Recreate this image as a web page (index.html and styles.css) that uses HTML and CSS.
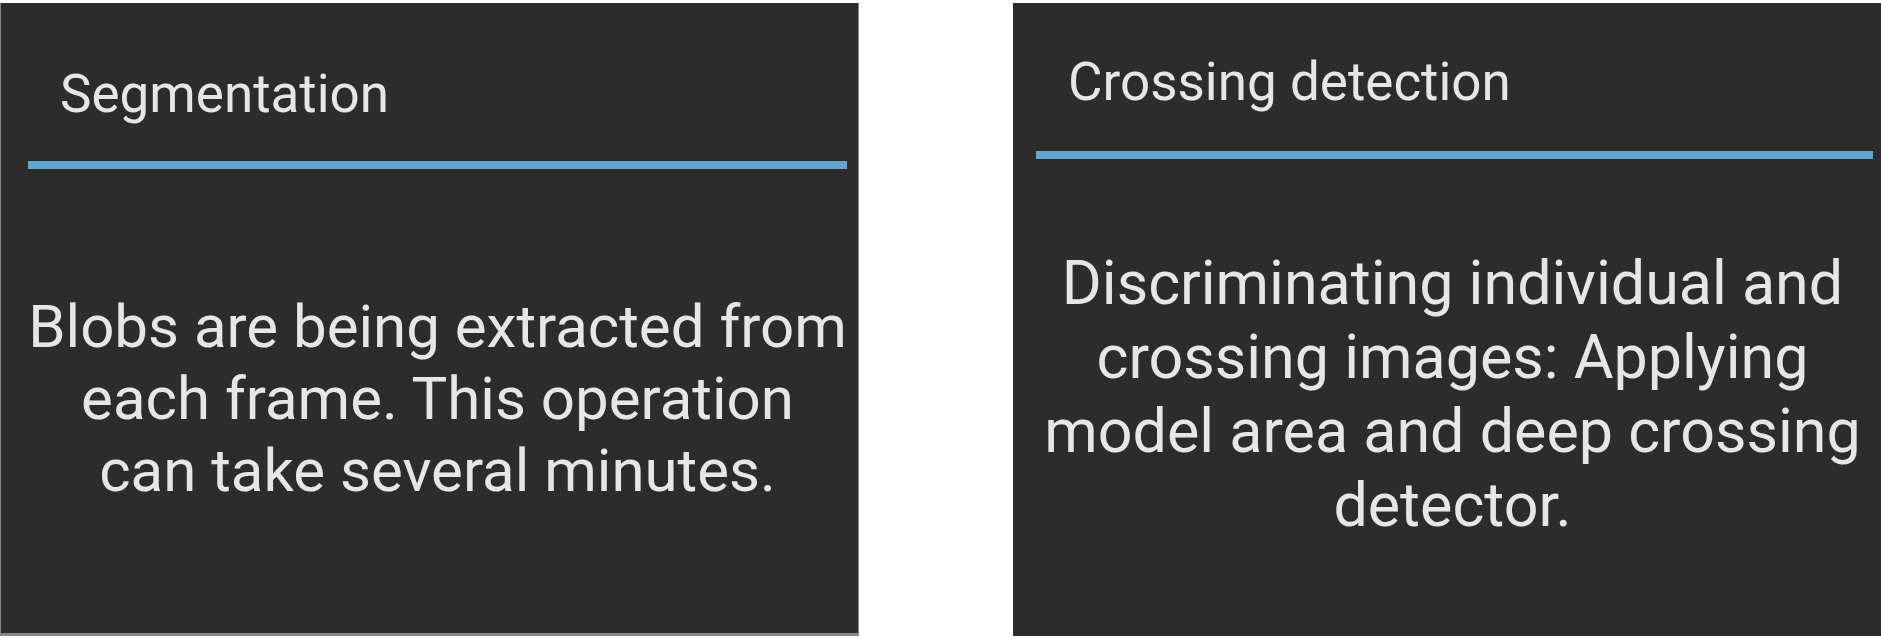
FILE: index.html
```
<!DOCTYPE html>
<html lang="en">
<head>
<meta charset="utf-8">
<meta name="viewport" content="width=device-width, initial-scale=1">
<title>Tracking progress</title>
<link rel="stylesheet" href="styles.css">
</head>
<body>
<main class="board">
  <section class="dialog dialog-segmentation">
    <h2 class="title">Segmentation</h2>
    <p class="message">Blobs are being extracted from each frame. This operation can take several minutes.</p>
  </section>
  <section class="dialog dialog-crossing">
    <h2 class="title">Crossing detection</h2>
    <p class="message">Discriminating individual and crossing images: Applying model area and deep crossing detector.</p>
  </section>
</main>
</body>
</html>
```
FILE: styles.css
```
* { box-sizing: border-box; }
body {
  margin: 0;
  background: #fff;
  font-family: Roboto, sans-serif;
  color: #e6e6e6;
}
.board {
  display: grid;
  grid-template-columns: 859fr 868fr;
  column-gap: 154px;
  min-height: 100vh;
  padding: 3px 0 2px;
}
.dialog {
  display: flex;
  flex-direction: column;
  background: #2c2c2c;
}
.title {
  margin: 0;
  border-bottom: 8px solid #62a4d2;
  font-size: 53px;
  font-weight: 400;
  line-height: 60px;
}
.message {
  margin: 0;
  text-align: center;
}
.dialog-segmentation {
  padding: 61px 11px 0 27px;
  border: solid #888;
  border-width: 0 1px 3px;
}
.dialog-segmentation .title { padding: 0 32px 37px; margin-bottom: 122px; }
.dialog-segmentation .message { font-size: 60px; line-height: 72px; }
.dialog-crossing { padding: 49px 8px 0 23px; }
.dialog-crossing .title { padding: 0 32px 39px; margin-bottom: 87px; }
.dialog-crossing .message { padding-right: 4px; font-size: 61px; line-height: 74px; }
```
